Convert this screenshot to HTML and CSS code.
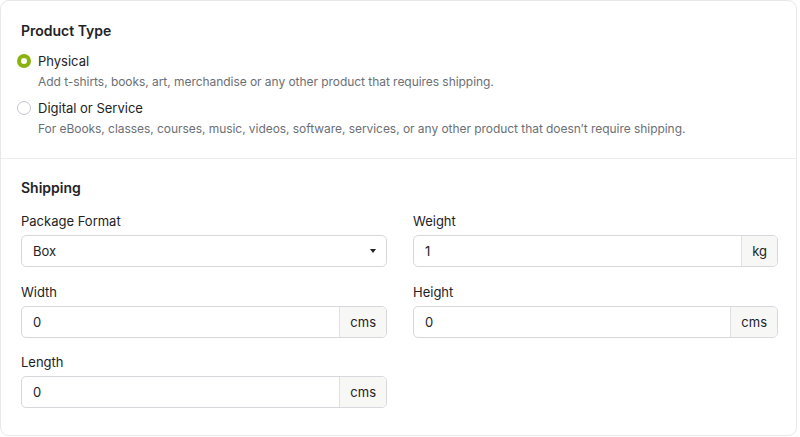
FILE: index.html
```html
<!DOCTYPE html>
<html lang="en">
<head>
    <meta charset="UTF-8">
    <meta name="viewport" content="width=device-width, initial-scale=1.0">
    <title>Product Settings</title>
    <link rel="stylesheet" href="styles.css">
</head>
<body>
    <div class="card">
        <section class="section">
            <h3>Product Type</h3>
            <label class="option">
                <span class="radio checked"></span>
                <span class="option-text">
                    <span class="option-title">Physical</span>
                    <span class="option-desc">Add t-shirts, books, art, merchandise or any other product that requires shipping.</span>
                </span>
            </label>
            <label class="option">
                <span class="radio"></span>
                <span class="option-text">
                    <span class="option-title">Digital or Service</span>
                    <span class="option-desc">For eBooks, classes, courses, music, videos, software, services, or any other product that doesn’t require shipping.</span>
                </span>
            </label>
        </section>

        <section class="section shipping">
            <h3>Shipping</h3>
            <div class="form-grid">
                <div class="field">
                    <label>Package Format</label>
                    <div class="select">
                        <span>Box</span>
                        <span class="caret"></span>
                    </div>
                </div>
                <div class="field">
                    <label>Weight</label>
                    <div class="input-group">
                        <div class="input">1</div>
                        <div class="addon">kg</div>
                    </div>
                </div>
                <div class="field">
                    <label>Width</label>
                    <div class="input-group">
                        <div class="input">0</div>
                        <div class="addon">cms</div>
                    </div>
                </div>
                <div class="field">
                    <label>Height</label>
                    <div class="input-group">
                        <div class="input">0</div>
                        <div class="addon">cms</div>
                    </div>
                </div>
                <div class="field">
                    <label>Length</label>
                    <div class="input-group">
                        <div class="input">0</div>
                        <div class="addon">cms</div>
                    </div>
                </div>
            </div>
        </section>
    </div>
</body>
</html>
```

FILE: styles.css
```css
body {
    font-family: 'Inter', 'Noto Sans', sans-serif;
    background-color: #ffffff;
    margin: 0;
    color: #222326;
}
.card {
    width: 797px;
    height: 436px;
    box-sizing: border-box;
    border: 1px solid #e8e8e8;
    border-radius: 9px;
    background: white;
}
.section {
    padding: 20px 20px 0 20px;
}
.section h3 {
    margin: 0;
    font-size: 14px;
    font-weight: 600;
    line-height: 20px;
}
.option {
    display: flex;
    gap: 7px;
    margin-top: 9px;
    font-size: 13px;
}
.section h3 + .option {
    margin-top: 11px;
}
.radio {
    width: 14px;
    height: 14px;
    box-sizing: border-box;
    border: 1px solid #c4c8cf;
    border-radius: 50%;
    margin-top: 2px;
    margin-left: -4px;
}
.radio.checked {
    border: 4px solid #8ab20f;
}
.option-text {
    display: flex;
    flex-direction: column;
    gap: 3px;
}
.option-title {
    line-height: 18px;
    color: #222326;
}
.option-desc {
    font-size: 12px;
    line-height: 17px;
    letter-spacing: -0.05px;
    color: #6b6f76;
}
.shipping {
    border-top: 1px solid #ececec;
    margin-top: 21px;
    padding-top: 19px;
}
.form-grid {
    display: grid;
    grid-template-columns: 366px 365px;
    column-gap: 26px;
    row-gap: 15.5px;
    margin-top: 14px;
}
.field label {
    display: block;
    font-size: 13px;
    line-height: 18px;
    margin-bottom: 5px;
}
.select, .input-group {
    height: 32px;
    box-sizing: border-box;
    border: 1px solid #d6d8dc;
    border-radius: 5px;
    display: flex;
    align-items: center;
    font-size: 13px;
}
.select {
    justify-content: space-between;
    padding: 0 10px 0 11px;
}
.caret {
    width: 0;
    height: 0;
    border-left: 3.5px solid transparent;
    border-right: 3.5px solid transparent;
    border-top: 4px solid #222;
}
.input-group {
    overflow: hidden;
}
.input {
    flex: 1;
    padding-left: 11px;
}
.addon {
    height: 100%;
    display: flex;
    align-items: center;
    padding: 0 10px;
    background: #f7f7f5;
    border-left: 1px solid #e0e0e0;
}
```
